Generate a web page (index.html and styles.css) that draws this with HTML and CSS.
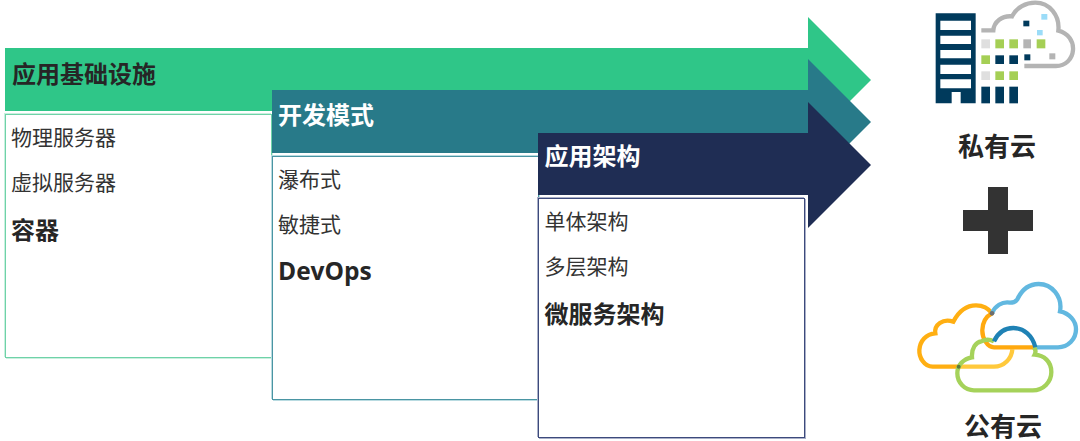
FILE: index.html
```html
<!DOCTYPE html>
<html lang="zh-CN">
<head>
<meta charset="utf-8">
<title>应用基础设施、开发模式与应用架构</title>
<link rel="stylesheet" href="styles.css">
</head>
<body>
<main class="diagram">
  <section class="stage stage-infra">
    <h2 class="bar">应用基础设施</h2>
    <ul class="panel">
      <li class="item">物理服务器</li>
      <li class="item">虚拟服务器</li>
      <li class="item item-strong">容器</li>
    </ul>
  </section>
  <section class="stage stage-dev">
    <h2 class="bar">开发模式</h2>
    <ul class="panel">
      <li class="item">瀑布式</li>
      <li class="item">敏捷式</li>
      <li class="item item-strong">DevOps</li>
    </ul>
  </section>
  <section class="stage stage-arch">
    <h2 class="bar">应用架构</h2>
    <ul class="panel">
      <li class="item">单体架构</li>
      <li class="item">多层架构</li>
      <li class="item item-strong">微服务架构</li>
    </ul>
  </section>
  <aside class="clouds">
    <svg class="icon-private" viewBox="0 0 480 360" aria-hidden="true">
      <path d="M184 91H220C222 66 246 46 276 49C290 22 318 8 346 8C388 8 420 46 415 92C445 100 461 124 459 150C457 178 436 198 408 198H313" fill="none" stroke="#b4b4b4" stroke-width="13"/>
      <path fill="#003a5c" fill-rule="evenodd" d="M47 40H167V310H122V276H95V310H47ZM61 62V90H153V62ZM61 107V132H153V107ZM61 150V175H153V150ZM61 194V222H153V194ZM61 238V265H153V238Z"/>
      <g fill="#003a5c">
        <rect x="184" y="260" width="26" height="50"/><rect x="226" y="260" width="26" height="50"/><rect x="268" y="260" width="26" height="50"/>
        <rect x="226" y="166" width="26" height="26"/><rect x="268" y="166" width="26" height="26"/>
        <rect x="313" y="163" width="18" height="18"/><rect x="310" y="62" width="18" height="17"/>
      </g>
      <g fill="#a5cf55">
        <rect x="226" y="118" width="26" height="27"/><rect x="268" y="118" width="26" height="27"/><rect x="350" y="118" width="26" height="27"/>
        <rect x="184" y="166" width="26" height="26"/>
        <rect x="226" y="214" width="26" height="26"/><rect x="268" y="214" width="26" height="26"/>
      </g>
      <g fill="#dfdfdf"><rect x="184" y="118" width="26" height="27"/><rect x="184" y="214" width="26" height="26"/></g>
      <g fill="#b4b4b4"><rect x="310" y="118" width="23" height="27"/><rect x="388" y="160" width="18" height="18"/></g>
      <g fill="#9bdcf8"><rect x="364" y="42" width="18" height="17"/><rect x="351" y="90" width="17" height="16"/></g>
    </svg>
    <p class="cloud-label label-private">私有云</p>
    <svg class="plus" viewBox="0 0 70 67" aria-hidden="true">
      <path fill="#333" d="M25 0H45V23H70V44H45V67H25V44H0V23H25Z"/>
    </svg>
    <svg class="icon-public" viewBox="0 0 510 375" aria-hidden="true">
      <g fill="none" stroke-width="13">
        <path stroke="#ffaf12" d="M150 290H68C42 290 27 262 28 240C30 212 48 192 76 190C72 165 98 144 130 155C146 124 170 106 198 106C218 106 236 116 246 130"/>
        <path stroke="#ffc93c" d="M150 290H252C282 290 305 266 307 238"/>
        <path stroke="#62b8e0" d="M246 130C254 108 276 94 300 98C312 98 318 94 322 88C336 58 358 42 386 42C426 42 458 80 450 124C478 130 498 152 498 178C498 208 474 232 444 232H372"/>
        <path stroke="#ffa90f" d="M372 232H252C232 232 216 204 217 180C218 156 230 138 246 130"/>
        <path stroke="#a5d25a" d="M252 214C240 208 226 208 214 214C198 216 184 234 186 262C160 266 142 286 142 310C142 338 164 361 192 361H368C400 361 424 336 424 306C424 274 402 256 374 254C378 246 378 240 372 232"/>
        <path stroke="#1f82b5" d="M252 214C264 188 284 174 310 174C342 174 368 198 376 232"/>
      </g>
      <circle cx="246" cy="130" r="7" fill="#6e6e6e"/>
      <circle cx="146" cy="290" r="6" fill="#5c7a3c"/>
    </svg>
    <p class="cloud-label label-public">公有云</p>
  </aside>
</main>
</body>
</html>
```

FILE: styles.css
```css
* {
  box-sizing: border-box;
}

html,
body {
  margin: 0;
  padding: 0;
  background: #fff;
}

body {
  font-family: "Noto Sans CJK SC", "Open Sans", sans-serif;
  color: #262626;
  overflow: hidden;
}

.diagram {
  position: relative;
  width: 1080px;
  height: 441px;
  overflow: hidden;
}

.stage {
  position: absolute;
  --accent: #2fc688;
  --edge: #6fd2a8;
  --halo: #c9f0df;
}

.stage-infra {
  left: 5px;
  top: 48px;
  width: 803px;
}

.stage-dev {
  left: 272px;
  top: 90px;
  width: 536px;
  --accent: #287a89;
  --edge: #4a95a3;
  --halo: #b9dbe1;
}

.stage-arch {
  left: 538px;
  top: 133px;
  width: 270px;
  --accent: #1f2d54;
  --edge: #3d4a7c;
  --halo: #aab0c8;
}

.bar {
  position: relative;
  margin: 0;
  height: 63px;
  padding: 0 0 0 6px;
  background: var(--accent);
  color: #fff;
  font-size: 24px;
  font-weight: 700;
  line-height: 48px;
}

.stage-infra .bar {
  padding-left: 7px;
  color: #262626;
  line-height: 50px;
}

.stage-arch .bar {
  height: 62px;
  padding-left: 6.5px;
  line-height: 43px;
}

.bar::after {
  content: "";
  position: absolute;
  left: 100%;
  top: -31px;
  width: 63px;
  height: 126px;
  background: var(--accent);
  clip-path: polygon(0 0, 100% 50%, 0 100%);
}

.panel {
  width: 267px;
  height: 244px;
  margin: 3px 0 0;
  padding: 1px 0 0 5px;
  list-style: none;
  background: #fff;
  border: 1px solid var(--edge);
  box-shadow: 1px 1px 0 var(--halo), -1px -1px 0 var(--halo);
}

.stage-arch .panel {
  height: 240px;
  padding-left: 5.5px;
}

.item {
  height: 45px;
  font-size: 21px;
  line-height: 41px;
  color: #333;
}

.item-strong {
  height: 49px;
  font-size: 24px;
  font-weight: 700;
  line-height: 45px;
  color: #262626;
}

.stage-dev .item-strong {
  font-family: "Open Sans", "Noto Sans CJK SC", sans-serif;
  font-size: 24.5px;
}

.clouds {
  position: absolute;
  left: 910px;
  top: 0;
  width: 170px;
  display: flex;
  flex-direction: column;
  align-items: flex-start;
}

.icon-private {
  display: block;
  width: 160px;
  height: 120px;
  margin-left: 10px;
}

.cloud-label {
  margin: 0;
  font-size: 26px;
  font-weight: 700;
  line-height: 34px;
}

.label-private {
  margin: 8px 0 0 48px;
}

.plus {
  display: block;
  width: 70px;
  height: 67px;
  margin: 25px 0 0 53px;
}

.icon-public {
  display: block;
  width: 170px;
  height: 125px;
  margin-top: 16px;
}

.label-public {
  margin: 16px 0 0 54px;
  line-height: 28px;
}
```
